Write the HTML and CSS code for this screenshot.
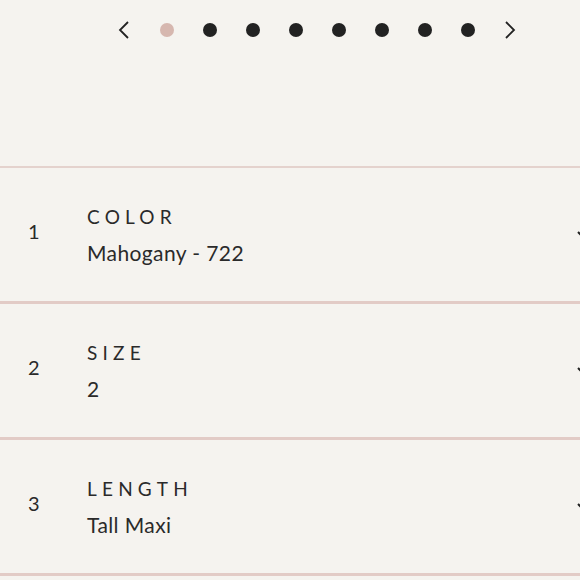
FILE: index.html
```html
<!DOCTYPE html>
<html>
<head>
<meta charset="utf-8">
<link rel="stylesheet" href="styles.css">
</head>
<body>
<div class="page">
  <nav class="pager">
    <svg class="arrow" width="12" height="18" viewBox="0 0 12 18"><path d="M10 1 L2 9 L10 17" fill="none" stroke="#222" stroke-width="1.8"/></svg>
    <span class="dot active"></span>
    <span class="dot"></span>
    <span class="dot"></span>
    <span class="dot"></span>
    <span class="dot"></span>
    <span class="dot"></span>
    <span class="dot"></span>
    <span class="dot"></span>
    <svg class="arrow" width="12" height="18" viewBox="0 0 12 18"><path d="M2 1 L10 9 L2 17" fill="none" stroke="#222" stroke-width="1.8"/></svg>
  </nav>
  <div class="steps">
    <div class="step">
      <span class="num">1</span>
      <div class="info"><div class="label">COLOR</div><div class="value">Mahogany - 722</div></div>
      <svg class="caret" width="14" height="10" viewBox="0 0 14 10"><path d="M1 2 L7 8 L13 2" fill="none" stroke="#222" stroke-width="2"/></svg>
    </div>
    <div class="step">
      <span class="num">2</span>
      <div class="info"><div class="label">SIZE</div><div class="value">2</div></div>
      <svg class="caret" width="14" height="10" viewBox="0 0 14 10"><path d="M1 2 L7 8 L13 2" fill="none" stroke="#222" stroke-width="2"/></svg>
    </div>
    <div class="step">
      <span class="num">3</span>
      <div class="info"><div class="label">LENGTH</div><div class="value">Tall Maxi</div></div>
      <svg class="caret" width="14" height="10" viewBox="0 0 14 10"><path d="M1 2 L7 8 L13 2" fill="none" stroke="#222" stroke-width="2"/></svg>
    </div>
  </div>
</div>
</body>
</html>
```
FILE: styles.css
```css
html, body {
  margin: 0;
  padding: 0;
  background: #f5f3ef;
  overflow: hidden;
}
.page {
  width: 580px;
  height: 580px;
  font-family: Lato, "Noto Sans", sans-serif;
  font-weight: 400;
  color: #2a2a2a;
}
.pager {
  height: 60px;
  display: flex;
  align-items: center;
  padding-left: 118px;
}
.arrow {
  flex: none;
}
.pager .arrow:first-child {
  margin-right: 30px;
}
.pager .arrow:last-child {
  margin-left: 29px;
}
.dot {
  width: 14px;
  height: 14px;
  border-radius: 50%;
  background: #222;
  margin-right: 29px;
  flex: none;
}
.dot:nth-last-of-type(1) {
  margin-right: 0;
}
.dot.active {
  background: #d6b7af;
}
.steps {
  margin-top: 106px;
  border-top: 2px solid #e4d2cd;
  width: 591px;
}
.step {
  height: 133px;
  border-bottom: 3px solid #e2cbc6;
  display: flex;
  align-items: center;
}
.num {
  width: 87px;
  padding-left: 28px;
  padding-bottom: 8px;
  box-sizing: border-box;
  font-size: 20px;
  flex: none;
}
.info {
  flex: 1;
}
.label {
  font-size: 19px;
  letter-spacing: 5.2px;
  line-height: 24px;
}
.value {
  font-size: 21px;
  letter-spacing: 0.4px;
  margin-top: 12px;
  line-height: 24px;
}
.caret {
  flex: none;
}
```
